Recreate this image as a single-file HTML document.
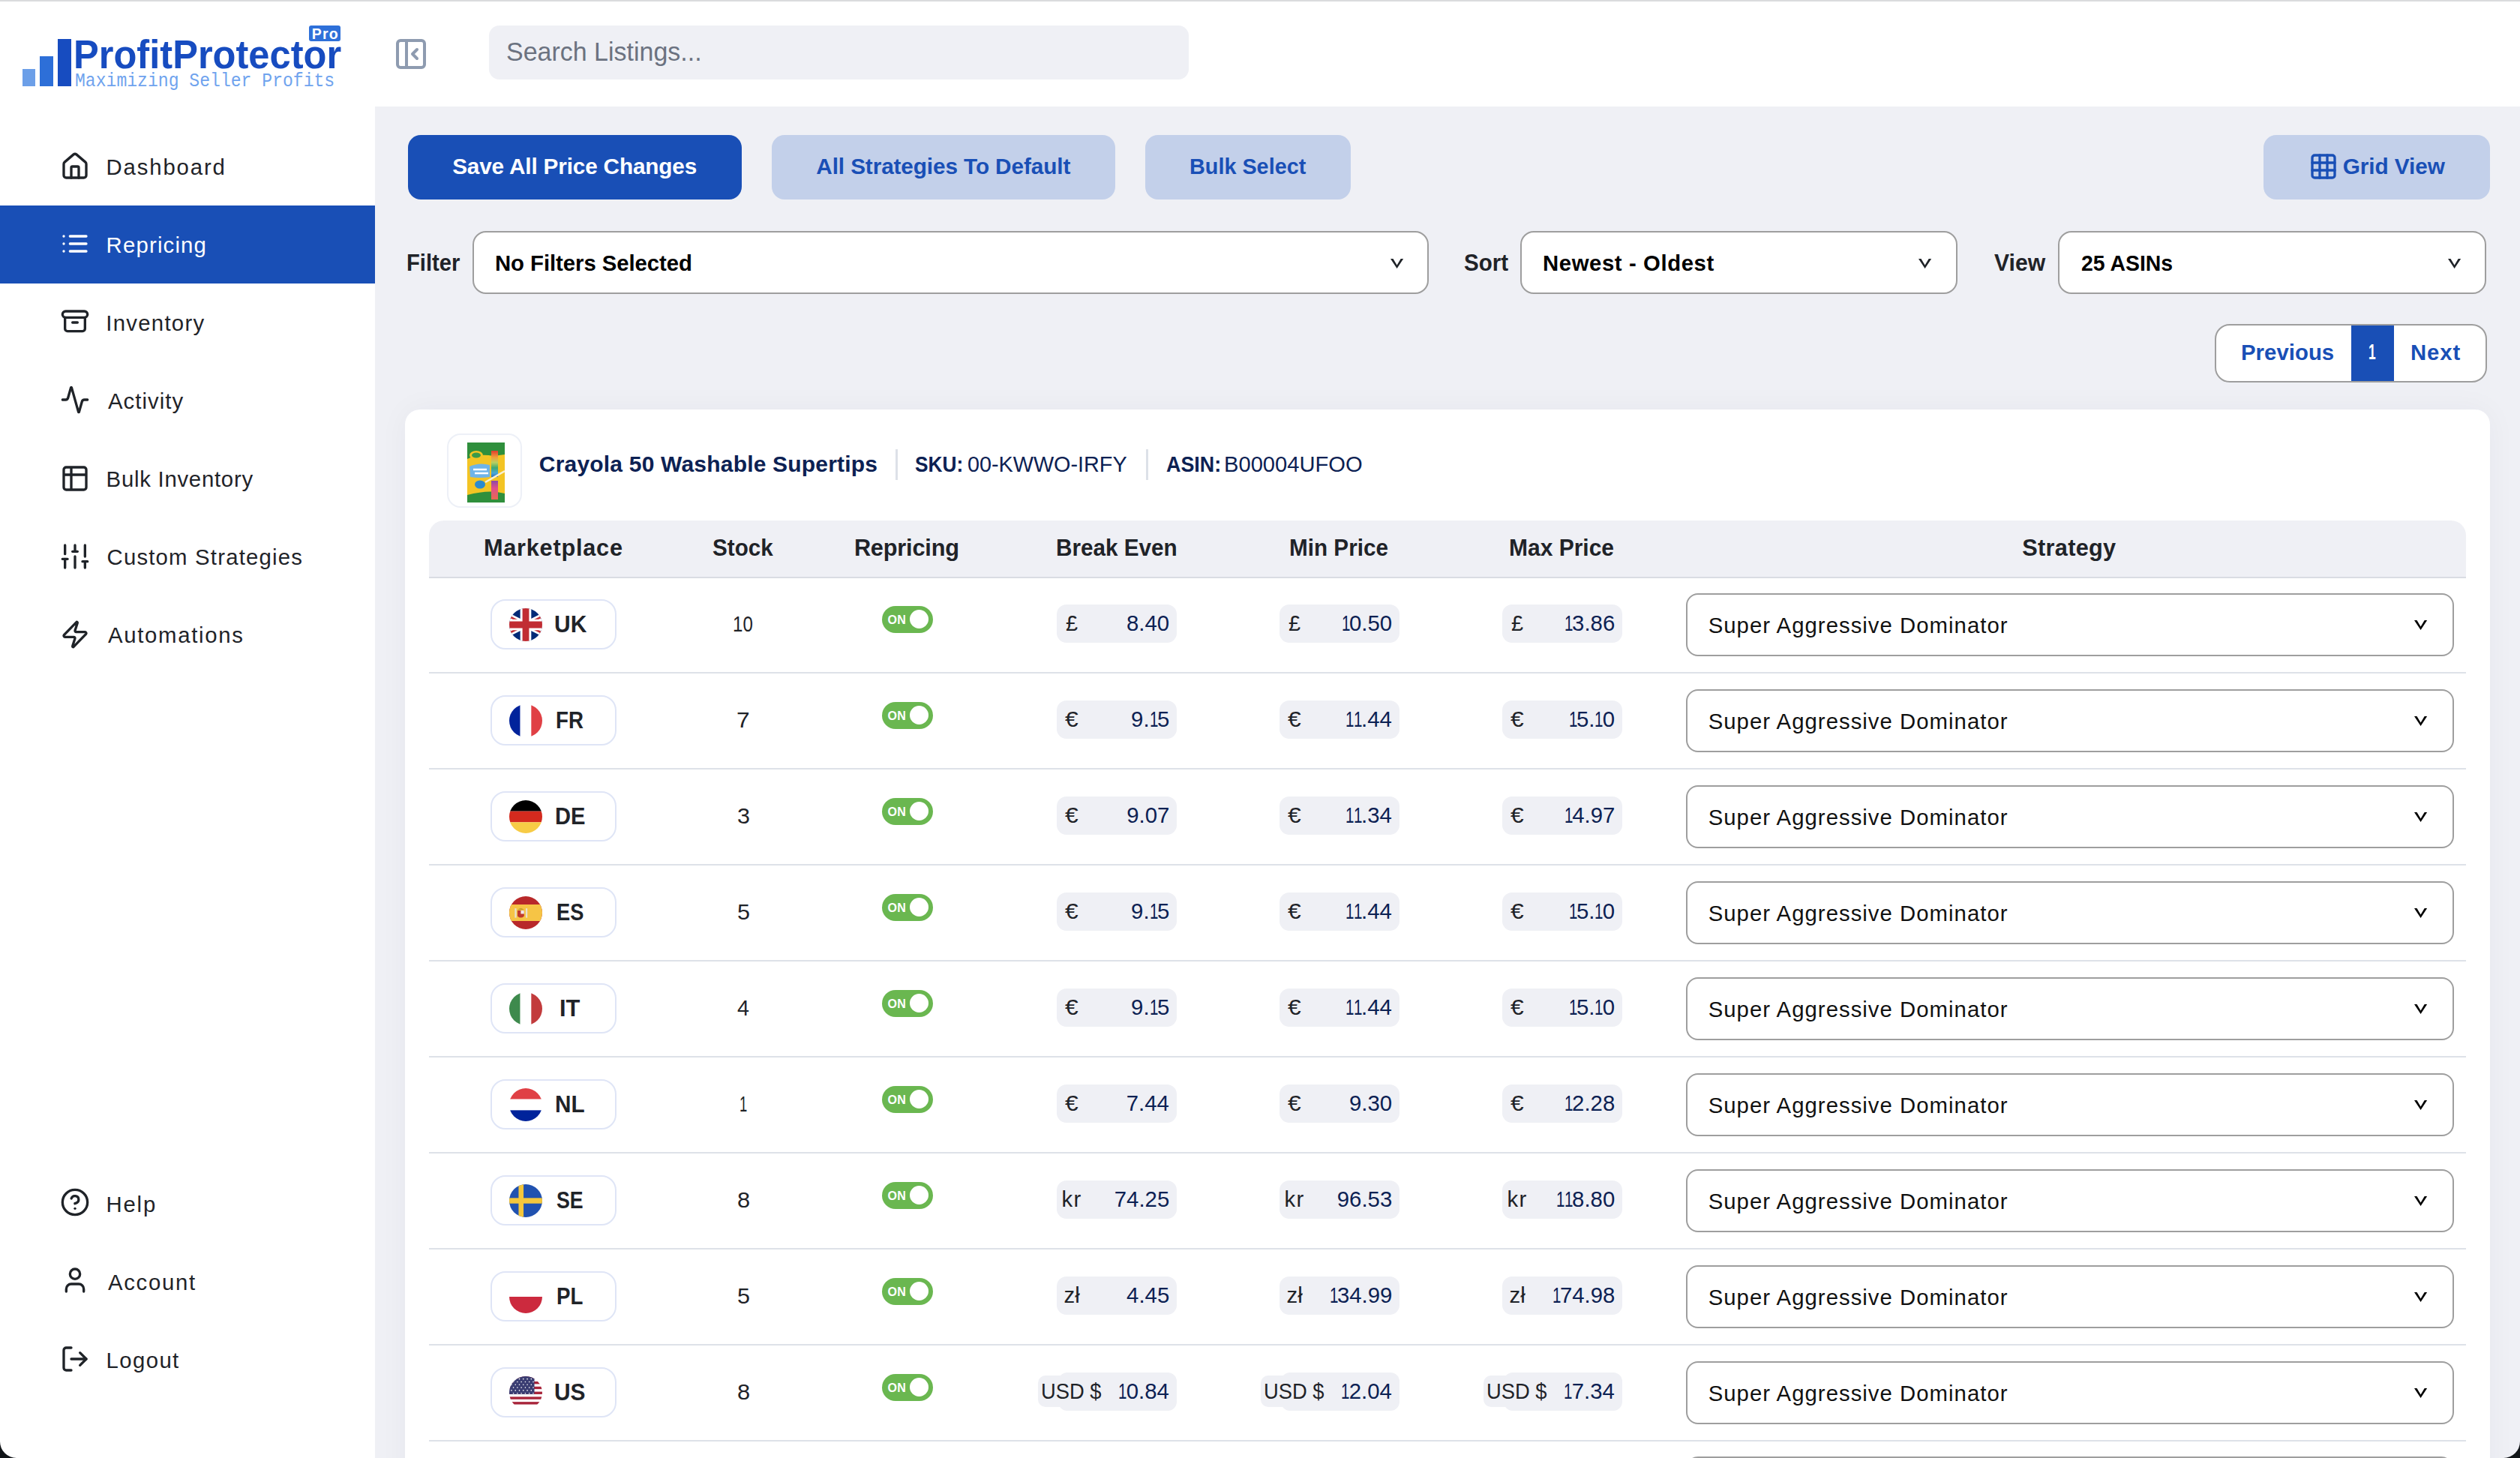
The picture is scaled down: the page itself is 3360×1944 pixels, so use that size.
<!DOCTYPE html>
<html><head><meta charset="utf-8"><style>
html,body{margin:0;padding:0;width:3360px;height:1944px;overflow:hidden;background:#fff;position:relative}
body{font-family:"Liberation Sans",sans-serif}
.t{position:absolute;white-space:nowrap}
.ic{position:absolute}
</style></head><body>
<div style="position:absolute;left:0;top:0;width:3360px;height:2px;background:#dadbdd"></div>
<div style="position:absolute;left:30px;top:92px;width:17px;height:23px;background:#6c9fe8"></div>
<div style="position:absolute;left:53px;top:75px;width:18px;height:40px;background:#2d6fd8"></div>
<div style="position:absolute;left:77px;top:52px;width:18px;height:63px;background:#174cc0"></div>
<div class="t" style="left:97.6px;top:34.6px;font-size:54.47px;line-height:76px;letter-spacing:0.00px;font-weight:700;color:#174cc0;transform:scaleX(0.9291);transform-origin:0 0;">ProfitProtector</div>
<div style="position:absolute;left:412px;top:34px;width:42px;height:21px;background:#2e70d9;border-radius:3px"></div>
<div class="t" style="left:415.7px;top:31.7px;font-size:19.55px;line-height:27px;letter-spacing:1.25px;font-weight:700;color:#ffffff;">Pro</div>
<div class="t" style="left:99.6px;top:90.1px;font-size:25.84px;line-height:36px;letter-spacing:0.00px;font-weight:400;color:#6fa3ee;transform:scaleX(0.8935);transform-origin:0 0;font-family:'Liberation Mono',monospace;">Maximizing Seller Profits</div>
<svg class="ic" style="left:524px;top:48px;" width="48" height="48" viewBox="0 0 24 24" fill="none" stroke="#8e9bb0" stroke-width="2" stroke-linecap="round" stroke-linejoin="round"><rect width="18" height="18" x="3" y="3" rx="2"/><path d="M9 3v18"/><path d="m16 15-3-3 3-3"/></svg>
<div style="position:absolute;left:652px;top:34px;width:933px;height:72px;background:#eff0f5;border-radius:14px"></div>
<div class="t" style="left:674.5px;top:44.4px;font-size:35.61px;line-height:50px;letter-spacing:0.00px;font-weight:400;color:#6b7280;transform:scaleX(0.9540);transform-origin:0 0;">Search Listings...</div>
<div style="position:absolute;left:500px;top:142px;width:2860px;height:1802px;background:#eff0f5"></div>
<svg class="ic" style="left:80px;top:202px;" width="40" height="40" viewBox="0 0 24 24" fill="none" stroke="#1f2328" stroke-width="2" stroke-linecap="round" stroke-linejoin="round"><path d="M15 21v-8a1 1 0 0 0-1-1h-4a1 1 0 0 0-1 1v8"/><path d="M3 10a2 2 0 0 1 .709-1.528l7-5.999a2 2 0 0 1 2.582 0l7 5.999A2 2 0 0 1 21 10v9a2 2 0 0 1-2 2H5a2 2 0 0 1-2-2z"/></svg>
<div class="t" style="left:141.6px;top:201.8px;font-size:29.33px;line-height:41px;letter-spacing:1.85px;font-weight:400;color:#1f2328;">Dashboard</div>
<div style="position:absolute;left:0;top:274px;width:500px;height:104px;background:#194fb6"></div>
<svg class="ic" style="left:80px;top:305px;" width="40" height="40" viewBox="0 0 24 24" fill="none" stroke="#ffffff" stroke-width="2" stroke-linecap="round" stroke-linejoin="round"><path d="M3 12h.01"/><path d="M3 18h.01"/><path d="M3 6h.01"/><path d="M8 12h13"/><path d="M8 18h13"/><path d="M8 6h13"/></svg>
<div class="t" style="left:141.6px;top:305.8px;font-size:29.33px;line-height:41px;letter-spacing:1.18px;font-weight:400;color:#ffffff;">Repricing</div>
<svg class="ic" style="left:80px;top:409.5px;" width="40" height="40" viewBox="0 0 24 24" fill="none" stroke="#1f2328" stroke-width="2" stroke-linecap="round" stroke-linejoin="round"><rect width="20" height="5" x="2" y="3" rx="2.5"/><path d="M4 8v9a2 2 0 0 0 2 2h12a2 2 0 0 0 2-2V8"/><path d="M10 12h4"/></svg>
<div class="t" style="left:141.3px;top:409.8px;font-size:29.33px;line-height:41px;letter-spacing:1.27px;font-weight:400;color:#1f2328;">Inventory</div>
<svg class="ic" style="left:80px;top:513px;" width="40" height="40" viewBox="0 0 24 24" fill="none" stroke="#1f2328" stroke-width="2" stroke-linecap="round" stroke-linejoin="round"><path d="M22 12h-2.48a2 2 0 0 0-1.93 1.46l-2.35 8.36a.25.25 0 0 1-.48 0L9.24 2.18a.25.25 0 0 0-.48 0l-2.35 8.36A2 2 0 0 1 4.49 12H2"/></svg>
<div class="t" style="left:143.9px;top:513.8px;font-size:29.33px;line-height:41px;letter-spacing:1.04px;font-weight:400;color:#1f2328;">Activity</div>
<svg class="ic" style="left:80px;top:618px;" width="40" height="40" viewBox="0 0 24 24" fill="none" stroke="#1f2328" stroke-width="2" stroke-linecap="round" stroke-linejoin="round"><path d="M9 3H5a2 2 0 0 0-2 2v4m6-6h10a2 2 0 0 1 2 2v4M9 3v18m0 0h10a2 2 0 0 0 2-2V9M9 21H5a2 2 0 0 1-2-2V9m0 0h18"/></svg>
<div class="t" style="left:141.6px;top:617.8px;font-size:29.33px;line-height:41px;letter-spacing:0.74px;font-weight:400;color:#1f2328;">Bulk Inventory</div>
<svg class="ic" style="left:80px;top:722px;" width="40" height="40" viewBox="0 0 24 24" fill="none" stroke="#1f2328" stroke-width="2" stroke-linecap="round" stroke-linejoin="round"><line x1="4" x2="4" y1="21" y2="14"/><line x1="4" x2="4" y1="10" y2="3"/><line x1="12" x2="12" y1="21" y2="12"/><line x1="12" x2="12" y1="8" y2="3"/><line x1="20" x2="20" y1="21" y2="16"/><line x1="20" x2="20" y1="12" y2="3"/><line x1="2" x2="6" y1="14" y2="14"/><line x1="10" x2="14" y1="8" y2="8"/><line x1="18" x2="22" y1="16" y2="16"/></svg>
<div class="t" style="left:142.5px;top:721.8px;font-size:29.33px;line-height:41px;letter-spacing:1.20px;font-weight:400;color:#1f2328;">Custom Strategies</div>
<svg class="ic" style="left:80px;top:826px;" width="40" height="40" viewBox="0 0 24 24" fill="none" stroke="#1f2328" stroke-width="2" stroke-linecap="round" stroke-linejoin="round"><path d="M4 14a1 1 0 0 1-.78-1.63l9.9-10.2a.5.5 0 0 1 .86.46l-1.92 6.02A1 1 0 0 0 13 10h7a1 1 0 0 1 .78 1.63l-9.9 10.2a.5.5 0 0 1-.86-.46l1.92-6.02A1 1 0 0 0 11 14z"/></svg>
<div class="t" style="left:143.9px;top:825.8px;font-size:29.33px;line-height:41px;letter-spacing:1.70px;font-weight:400;color:#1f2328;">Automations</div>
<svg class="ic" style="left:80px;top:1583px;" width="40" height="40" viewBox="0 0 24 24" fill="none" stroke="#1f2328" stroke-width="2" stroke-linecap="round" stroke-linejoin="round"><circle cx="12" cy="12" r="10"/><path d="M9.09 9a3 3 0 0 1 5.83 1c0 2-3 3-3 3"/><path d="M12 17h.01"/></svg>
<div class="t" style="left:141.6px;top:1584.8px;font-size:29.33px;line-height:41px;letter-spacing:1.77px;font-weight:400;color:#1f2328;">Help</div>
<svg class="ic" style="left:80px;top:1687.3px;" width="40" height="40" viewBox="0 0 24 24" fill="none" stroke="#1f2328" stroke-width="2" stroke-linecap="round" stroke-linejoin="round"><path d="M19 21v-2a4 4 0 0 0-4-4H9a4 4 0 0 0-4 4v2"/><circle cx="12" cy="7" r="4"/></svg>
<div class="t" style="left:143.9px;top:1688.8px;font-size:29.33px;line-height:41px;letter-spacing:1.72px;font-weight:400;color:#1f2328;">Account</div>
<svg class="ic" style="left:80px;top:1791.5px;" width="40" height="40" viewBox="0 0 24 24" fill="none" stroke="#1f2328" stroke-width="2" stroke-linecap="round" stroke-linejoin="round"><path d="M9 21H5a2 2 0 0 1-2-2V5a2 2 0 0 1 2-2h4"/><polyline points="16 17 21 12 16 7"/><line x1="21" x2="9" y1="12" y2="12"/></svg>
<div class="t" style="left:141.6px;top:1792.8px;font-size:29.33px;line-height:41px;letter-spacing:1.39px;font-weight:400;color:#1f2328;">Logout</div>
<div style="position:absolute;left:544px;top:180px;width:445px;height:86px;background:#194fb6;border-radius:17px"></div>
<div class="t" style="left:603.2px;top:201.3px;font-size:29.75px;line-height:42px;letter-spacing:-0.17px;font-weight:700;color:#ffffff;">Save All Price Changes</div>
<div style="position:absolute;left:1029px;top:180px;width:458px;height:86px;background:#c3d0ea;border-radius:17px"></div>
<div class="t" style="left:1088.3px;top:201.3px;font-size:29.75px;line-height:42px;letter-spacing:-0.11px;font-weight:700;color:#194fb6;">All Strategies To Default</div>
<div style="position:absolute;left:1527px;top:180px;width:274px;height:86px;background:#c3d0ea;border-radius:17px"></div>
<div class="t" style="left:1586.1px;top:201.3px;font-size:29.75px;line-height:42px;letter-spacing:0.00px;font-weight:700;color:#194fb6;transform:scaleX(0.9681);transform-origin:0 0;">Bulk Select</div>
<div style="position:absolute;left:3018px;top:180px;width:302px;height:86px;background:#c3d0ea;border-radius:17px"></div>
<svg class="ic" style="left:3078px;top:202px;" width="40" height="40" viewBox="0 0 24 24" fill="none" stroke="#194fb6" stroke-width="2" stroke-linecap="round" stroke-linejoin="round"><rect width="18" height="18" x="3" y="3" rx="2"/><path d="M3 9h18"/><path d="M3 15h18"/><path d="M9 3v18"/><path d="M15 3v18"/></svg>
<div class="t" style="left:3123.8px;top:201.3px;font-size:29.75px;line-height:42px;letter-spacing:-0.07px;font-weight:700;color:#194fb6;">Grid View</div>
<div class="t" style="left:542.0px;top:328.9px;font-size:30.73px;line-height:43px;letter-spacing:0.00px;font-weight:700;color:#1f2328;transform:scaleX(0.9505);transform-origin:0 0;">Filter</div>
<div style="position:absolute;left:630px;top:308px;width:1275px;height:84px;background:#fff;border:2px solid #9e9e9e;box-sizing:border-box;border-radius:18px"></div>
<div class="t" style="left:660.0px;top:329.8px;font-size:29.33px;line-height:41px;letter-spacing:-0.06px;font-weight:700;color:#000;">No Filters Selected</div>
<svg class="ic" style="left:1854.4px;top:344.5px" width="17.2" height="13" viewBox="0 0 17.2 13"><polygon points="0,0 3.5,0 8.6,8.4 13.7,0 17.2,0 8.6,13" fill="#1f2328"/></svg>
<div class="t" style="left:1952.2px;top:328.9px;font-size:30.73px;line-height:43px;letter-spacing:0.00px;font-weight:700;color:#1f2328;transform:scaleX(0.9619);transform-origin:0 0;">Sort</div>
<div style="position:absolute;left:2027px;top:308px;width:583px;height:84px;background:#fff;border:2px solid #9e9e9e;box-sizing:border-box;border-radius:18px"></div>
<div class="t" style="left:2057.0px;top:329.8px;font-size:29.33px;line-height:41px;letter-spacing:0.59px;font-weight:700;color:#000;">Newest - Oldest</div>
<svg class="ic" style="left:2558.4px;top:344.5px" width="17.2" height="13" viewBox="0 0 17.2 13"><polygon points="0,0 3.5,0 8.6,8.4 13.7,0 17.2,0 8.6,13" fill="#1f2328"/></svg>
<div class="t" style="left:2658.8px;top:328.9px;font-size:30.73px;line-height:43px;letter-spacing:0.00px;font-weight:700;color:#1f2328;transform:scaleX(0.9814);transform-origin:0 0;">View</div>
<div style="position:absolute;left:2744px;top:308px;width:571px;height:84px;background:#fff;border:2px solid #9e9e9e;box-sizing:border-box;border-radius:18px"></div>
<div class="t" style="left:2775.0px;top:329.8px;font-size:29.33px;line-height:41px;letter-spacing:0.00px;font-weight:700;color:#000;transform:scaleX(0.9690);transform-origin:0 0;">25 ASINs</div>
<svg class="ic" style="left:3264.4px;top:344.5px" width="17.2" height="13" viewBox="0 0 17.2 13"><polygon points="0,0 3.5,0 8.6,8.4 13.7,0 17.2,0 8.6,13" fill="#1f2328"/></svg>
<div style="position:absolute;left:2953px;top:432px;width:363px;height:78px;background:#fff;border:2px solid #9e9e9e;box-sizing:border-box;border-radius:20px"></div>
<div style="position:absolute;left:3135px;top:434px;width:57px;height:74px;background:#194fb6"></div>
<div class="t" style="left:2988.0px;top:448.8px;font-size:29.33px;line-height:41px;letter-spacing:0.04px;font-weight:700;color:#194fb6;">Previous</div>
<div class="t" style="left:3158.2px;top:449.3px;font-size:28.63px;line-height:40px;letter-spacing:0.00px;font-weight:400;color:#ffffff;transform:scaleX(0.6057);transform-origin:0 0;font-weight:600">1</div>
<div class="t" style="left:3214.0px;top:448.8px;font-size:29.33px;line-height:41px;letter-spacing:0.90px;font-weight:700;color:#194fb6;">Next</div>
<div style="position:absolute;left:540px;top:546px;width:2780px;height:1500px;background:#fff;border-radius:20px;box-shadow:0 0 40px rgba(30,40,80,0.045)"></div>
<div style="position:absolute;left:596px;top:578px;width:100px;height:99px;background:#fff;border:2px solid #edf0f7;box-sizing:border-box;border-radius:18px"></div>
<svg style="position:absolute;left:623px;top:590px" width="50" height="80" viewBox="0 0 50 80">
<defs><linearGradient id="mk1" x1="0" y1="0" x2="0" y2="1"><stop offset="0" stop-color="#e23b2e"/><stop offset="0.25" stop-color="#f0a03a"/><stop offset="0.45" stop-color="#b8d060"/><stop offset="0.65" stop-color="#3fa870"/><stop offset="0.85" stop-color="#4aa8d8"/><stop offset="1" stop-color="#2f6fb8"/></linearGradient>
<linearGradient id="mk2" x1="0" y1="0" x2="0" y2="1"><stop offset="0" stop-color="#8a4aa8"/><stop offset="0.4" stop-color="#e0508a"/><stop offset="1" stop-color="#e86a50"/></linearGradient></defs>
<rect x="0" y="0" width="50" height="80" fill="#2f8f3c"/>
<path d="M0 22 Q15 14 35 18 L50 16 V68 Q30 62 0 70 Z" fill="#f3c424"/>
<ellipse cx="12" cy="17" rx="9" ry="6" fill="#f3c424"/>
<ellipse cx="12" cy="17" rx="6" ry="3.5" fill="#3a9a4a"/>
<path d="M3 32 Q16 26 30 30 L30 46 Q16 48 4 46 Z" fill="#6fb4e8"/>
<path d="M8 36 H26 M10 41 H28" stroke="#ffffff" stroke-width="2.5"/>
<ellipse cx="17" cy="56" rx="7" ry="5.5" fill="#2a8ad0"/>
<rect x="32" y="11" width="9" height="35" fill="url(#mk1)"/>
<rect x="32" y="51" width="9" height="25" fill="url(#mk2)"/>
<path d="M24 53 L50 38" stroke="#f6f0d8" stroke-width="2.5"/>
</svg>
<div class="t" style="left:718.8px;top:598.3px;font-size:30.03px;line-height:42px;letter-spacing:0.19px;font-weight:700;color:#0c2153;">Crayola 50 Washable Supertips</div>
<div style="position:absolute;left:1194px;top:599px;width:3px;height:41px;background:#dde1e8"></div>
<div class="t" style="left:1220.3px;top:598.3px;font-size:30.03px;line-height:42px;letter-spacing:0.00px;font-weight:700;color:#0c2153;transform:scaleX(0.8747);transform-origin:0 0;">SKU:</div>
<div class="t" style="left:1289.9px;top:598.3px;font-size:30.03px;line-height:42px;letter-spacing:0.00px;font-weight:400;color:#0c2153;transform:scaleX(0.9586);transform-origin:0 0;">00-KWWO-IRFY</div>
<div style="position:absolute;left:1528px;top:599px;width:3px;height:41px;background:#dde1e8"></div>
<div class="t" style="left:1555.3px;top:598.3px;font-size:30.03px;line-height:42px;letter-spacing:0.00px;font-weight:700;color:#0c2153;transform:scaleX(0.8957);transform-origin:0 0;">ASIN:</div>
<div class="t" style="left:1631.6px;top:598.3px;font-size:30.03px;line-height:42px;letter-spacing:0.00px;font-weight:400;color:#0c2153;transform:scaleX(0.9710);transform-origin:0 0;">B00004UFOO</div>
<div style="position:absolute;left:572px;top:694px;width:2716px;height:77px;background:#eff0f5;border-radius:20px 20px 0 0;border-bottom:2px solid #d9dce3;box-sizing:border-box"></div>
<div class="t" style="left:644.9px;top:708.9px;font-size:30.73px;line-height:43px;letter-spacing:0.75px;font-weight:700;color:#1f2328;">Marketplace</div>
<div class="t" style="left:950.2px;top:708.9px;font-size:30.73px;line-height:43px;letter-spacing:0.00px;font-weight:700;color:#1f2328;transform:scaleX(0.9652);transform-origin:0 0;">Stock</div>
<div class="t" style="left:1138.9px;top:708.9px;font-size:30.73px;line-height:43px;letter-spacing:-0.20px;font-weight:700;color:#1f2328;">Repricing</div>
<div class="t" style="left:1408.0px;top:708.9px;font-size:30.73px;line-height:43px;letter-spacing:0.00px;font-weight:700;color:#1f2328;transform:scaleX(0.9666);transform-origin:0 0;">Break Even</div>
<div class="t" style="left:1719.0px;top:708.9px;font-size:30.73px;line-height:43px;letter-spacing:0.00px;font-weight:700;color:#1f2328;transform:scaleX(0.9663);transform-origin:0 0;">Min Price</div>
<div class="t" style="left:2012.0px;top:708.9px;font-size:30.73px;line-height:43px;letter-spacing:0.00px;font-weight:700;color:#1f2328;transform:scaleX(0.9762);transform-origin:0 0;">Max Price</div>
<div class="t" style="left:2696.2px;top:708.9px;font-size:30.73px;line-height:43px;letter-spacing:0.30px;font-weight:700;color:#1f2328;">Strategy</div>
<div style="position:absolute;left:572px;top:896px;width:2716px;height:2px;background:#dee2e8"></div>
<div style="position:absolute;left:654px;top:799px;width:168px;height:67px;border:2px solid #dfe5f6;box-sizing:border-box;border-radius:20px;background:#fff"></div>
<svg style="position:absolute;left:679px;top:811px" width="44" height="44" viewBox="0 0 60 60"><defs><clipPath id="c0"><circle cx="30" cy="30" r="30"/></clipPath></defs><g clip-path="url(#c0)"><svg x="-30" y="0" width="120" height="60" viewBox="0 0 120 60" overflow="visible"><rect width="120" height="60" fill="#012a77"/>
<path d="M0 0L120 60M120 0L0 60" stroke="#fff" stroke-width="11"/>
<path d="M0 0L120 60M120 0L0 60" stroke="#c12d33" stroke-width="3.5"/>
<path d="M60 0V60M0 30H120" stroke="#fff" stroke-width="20"/>
<path d="M60 0V60M0 30H120" stroke="#c12d33" stroke-width="12"/></svg></g></svg>
<div class="t" style="left:738.5px;top:810.4px;font-size:31.56px;line-height:44px;letter-spacing:0.00px;font-weight:700;color:#1f2328;transform:scaleX(0.9493);transform-origin:0 0;">UK</div>
<div class="t" style="left:977.2px;top:811.3px;font-size:29.33px;line-height:41px;letter-spacing:0.00px;font-weight:400;color:#1f2328;transform:scaleX(0.8203);transform-origin:0 0;">10</div>
<div style="position:absolute;left:1176px;top:808px;width:68px;height:36px;border-radius:18px;background:#6ab750"></div>
<div style="position:absolute;left:1213px;top:813px;width:25px;height:25px;border-radius:13px;background:#fff"></div>
<div class="t" style="left:1183.4px;top:815.4px;font-size:16.06px;line-height:22px;letter-spacing:0.33px;font-weight:700;color:#ffffff;">ON</div>
<div style="position:absolute;left:1409px;top:806px;width:160px;height:51px;background:#eff0f5;border-radius:13px"></div>
<div class="t" style="left:1420.7px;top:810.3px;font-size:29.33px;line-height:41px;letter-spacing:0.00px;font-weight:400;color:#1f2328;transform:scaleX(0.9846);transform-origin:0 0;">£</div>
<div class="t" style="right:1800.9px;top:810.3px;font-size:29.33px;line-height:41px;font-weight:400;color:#0c2153;text-align:right">8.40</div>
<div style="position:absolute;left:1706px;top:806px;width:160px;height:51px;background:#eff0f5;border-radius:13px"></div>
<div class="t" style="left:1717.7px;top:810.3px;font-size:29.33px;line-height:41px;letter-spacing:0.00px;font-weight:400;color:#1f2328;transform:scaleX(0.9846);transform-origin:0 0;">£</div>
<div class="t" style="right:1503.9px;top:810.3px;font-size:29.33px;line-height:41px;font-weight:400;color:#0c2153;text-align:right"><span style="display:inline-block;transform:scaleX(0.7);transform-origin:0 0;margin-right:-6.00px">1</span>0.50</div>
<div style="position:absolute;left:2003px;top:806px;width:160px;height:51px;background:#eff0f5;border-radius:13px"></div>
<div class="t" style="left:2014.7px;top:810.3px;font-size:29.33px;line-height:41px;letter-spacing:0.00px;font-weight:400;color:#1f2328;transform:scaleX(0.9846);transform-origin:0 0;">£</div>
<div class="t" style="right:1206.8px;top:810.3px;font-size:29.33px;line-height:41px;font-weight:400;color:#0c2153;text-align:right"><span style="display:inline-block;transform:scaleX(0.7);transform-origin:0 0;margin-right:-6.00px">1</span>3.86</div>
<div style="position:absolute;left:2248px;top:791px;width:1024px;height:84px;background:#fff;border:2px solid #9e9e9e;box-sizing:border-box;border-radius:16px"></div>
<div class="t" style="left:2277.7px;top:812.8px;font-size:29.33px;line-height:41px;letter-spacing:1.02px;font-weight:400;color:#111;">Super Aggressive Dominator</div>
<svg class="ic" style="left:3218.8px;top:827.0px" width="17.2" height="13" viewBox="0 0 17.2 13"><polygon points="0,0 3.5,0 8.6,8.4 13.7,0 17.2,0 8.6,13" fill="#000"/></svg>
<div style="position:absolute;left:572px;top:1024px;width:2716px;height:2px;background:#dee2e8"></div>
<div style="position:absolute;left:654px;top:927px;width:168px;height:67px;border:2px solid #dfe5f6;box-sizing:border-box;border-radius:20px;background:#fff"></div>
<svg style="position:absolute;left:679px;top:939px" width="44" height="44" viewBox="0 0 60 60"><defs><clipPath id="c1"><circle cx="30" cy="30" r="30"/></clipPath></defs><g clip-path="url(#c1)"><rect width="20" height="60" fill="#00239b"/><rect x="20" width="20" height="60" fill="#fff"/><rect x="40" width="20" height="60" fill="#e04045"/></g></svg>
<div class="t" style="left:741.0px;top:938.4px;font-size:31.56px;line-height:44px;letter-spacing:0.00px;font-weight:700;color:#1f2328;transform:scaleX(0.8779);transform-origin:0 0;">FR</div>
<div class="t" style="left:982.4px;top:939.3px;font-size:29.33px;line-height:41px;letter-spacing:0.00px;font-weight:400;color:#1f2328;transform:scaleX(1.0806);transform-origin:0 0;">7</div>
<div style="position:absolute;left:1176px;top:936px;width:68px;height:36px;border-radius:18px;background:#6ab750"></div>
<div style="position:absolute;left:1213px;top:941px;width:25px;height:25px;border-radius:13px;background:#fff"></div>
<div class="t" style="left:1183.4px;top:943.4px;font-size:16.06px;line-height:22px;letter-spacing:0.33px;font-weight:700;color:#ffffff;">ON</div>
<div style="position:absolute;left:1409px;top:934px;width:160px;height:51px;background:#eff0f5;border-radius:13px"></div>
<div class="t" style="left:1419.8px;top:938.3px;font-size:29.33px;line-height:41px;letter-spacing:0.00px;font-weight:400;color:#1f2328;transform:scaleX(1.0834);transform-origin:0 0;">€</div>
<div class="t" style="right:1800.8px;top:938.3px;font-size:29.33px;line-height:41px;font-weight:400;color:#0c2153;text-align:right">9.<span style="display:inline-block;transform:scaleX(0.7);transform-origin:0 0;margin-right:-6.00px">1</span>5</div>
<div style="position:absolute;left:1706px;top:934px;width:160px;height:51px;background:#eff0f5;border-radius:13px"></div>
<div class="t" style="left:1716.8px;top:938.3px;font-size:29.33px;line-height:41px;letter-spacing:0.00px;font-weight:400;color:#1f2328;transform:scaleX(1.0834);transform-origin:0 0;">€</div>
<div class="t" style="right:1504.2px;top:938.3px;font-size:29.33px;line-height:41px;font-weight:400;color:#0c2153;text-align:right"><span style="display:inline-block;transform:scaleX(0.7);transform-origin:0 0;margin-right:-6.00px">1</span><span style="display:inline-block;transform:scaleX(0.7);transform-origin:0 0;margin-right:-6.00px">1</span>.44</div>
<div style="position:absolute;left:2003px;top:934px;width:160px;height:51px;background:#eff0f5;border-radius:13px"></div>
<div class="t" style="left:2013.8px;top:938.3px;font-size:29.33px;line-height:41px;letter-spacing:0.00px;font-weight:400;color:#1f2328;transform:scaleX(1.0834);transform-origin:0 0;">€</div>
<div class="t" style="right:1206.9px;top:938.3px;font-size:29.33px;line-height:41px;font-weight:400;color:#0c2153;text-align:right"><span style="display:inline-block;transform:scaleX(0.7);transform-origin:0 0;margin-right:-6.00px">1</span>5.<span style="display:inline-block;transform:scaleX(0.7);transform-origin:0 0;margin-right:-6.00px">1</span>0</div>
<div style="position:absolute;left:2248px;top:919px;width:1024px;height:84px;background:#fff;border:2px solid #9e9e9e;box-sizing:border-box;border-radius:16px"></div>
<div class="t" style="left:2277.7px;top:940.8px;font-size:29.33px;line-height:41px;letter-spacing:1.02px;font-weight:400;color:#111;">Super Aggressive Dominator</div>
<svg class="ic" style="left:3218.8px;top:955.0px" width="17.2" height="13" viewBox="0 0 17.2 13"><polygon points="0,0 3.5,0 8.6,8.4 13.7,0 17.2,0 8.6,13" fill="#000"/></svg>
<div style="position:absolute;left:572px;top:1152px;width:2716px;height:2px;background:#dee2e8"></div>
<div style="position:absolute;left:654px;top:1055px;width:168px;height:67px;border:2px solid #dfe5f6;box-sizing:border-box;border-radius:20px;background:#fff"></div>
<svg style="position:absolute;left:679px;top:1067px" width="44" height="44" viewBox="0 0 60 60"><defs><clipPath id="c2"><circle cx="30" cy="30" r="30"/></clipPath></defs><g clip-path="url(#c2)"><rect width="60" height="20" fill="#000"/><rect y="20" width="60" height="20" fill="#d42a1e"/><rect y="40" width="60" height="20" fill="#f7cb45"/></g></svg>
<div class="t" style="left:739.6px;top:1066.4px;font-size:31.56px;line-height:44px;letter-spacing:0.00px;font-weight:700;color:#1f2328;transform:scaleX(0.9239);transform-origin:0 0;">DE</div>
<div class="t" style="left:982.9px;top:1067.3px;font-size:29.33px;line-height:41px;letter-spacing:0.00px;font-weight:400;color:#1f2328;transform:scaleX(1.0408);transform-origin:0 0;">3</div>
<div style="position:absolute;left:1176px;top:1064px;width:68px;height:36px;border-radius:18px;background:#6ab750"></div>
<div style="position:absolute;left:1213px;top:1069px;width:25px;height:25px;border-radius:13px;background:#fff"></div>
<div class="t" style="left:1183.4px;top:1071.4px;font-size:16.06px;line-height:22px;letter-spacing:0.33px;font-weight:700;color:#ffffff;">ON</div>
<div style="position:absolute;left:1409px;top:1062px;width:160px;height:51px;background:#eff0f5;border-radius:13px"></div>
<div class="t" style="left:1419.8px;top:1066.3px;font-size:29.33px;line-height:41px;letter-spacing:0.00px;font-weight:400;color:#1f2328;transform:scaleX(1.0834);transform-origin:0 0;">€</div>
<div class="t" style="right:1800.6px;top:1066.3px;font-size:29.33px;line-height:41px;font-weight:400;color:#0c2153;text-align:right">9.07</div>
<div style="position:absolute;left:1706px;top:1062px;width:160px;height:51px;background:#eff0f5;border-radius:13px"></div>
<div class="t" style="left:1716.8px;top:1066.3px;font-size:29.33px;line-height:41px;letter-spacing:0.00px;font-weight:400;color:#1f2328;transform:scaleX(1.0834);transform-origin:0 0;">€</div>
<div class="t" style="right:1504.2px;top:1066.3px;font-size:29.33px;line-height:41px;font-weight:400;color:#0c2153;text-align:right"><span style="display:inline-block;transform:scaleX(0.7);transform-origin:0 0;margin-right:-6.00px">1</span><span style="display:inline-block;transform:scaleX(0.7);transform-origin:0 0;margin-right:-6.00px">1</span>.34</div>
<div style="position:absolute;left:2003px;top:1062px;width:160px;height:51px;background:#eff0f5;border-radius:13px"></div>
<div class="t" style="left:2013.8px;top:1066.3px;font-size:29.33px;line-height:41px;letter-spacing:0.00px;font-weight:400;color:#1f2328;transform:scaleX(1.0834);transform-origin:0 0;">€</div>
<div class="t" style="right:1206.6px;top:1066.3px;font-size:29.33px;line-height:41px;font-weight:400;color:#0c2153;text-align:right"><span style="display:inline-block;transform:scaleX(0.7);transform-origin:0 0;margin-right:-6.00px">1</span>4.97</div>
<div style="position:absolute;left:2248px;top:1047px;width:1024px;height:84px;background:#fff;border:2px solid #9e9e9e;box-sizing:border-box;border-radius:16px"></div>
<div class="t" style="left:2277.7px;top:1068.8px;font-size:29.33px;line-height:41px;letter-spacing:1.02px;font-weight:400;color:#111;">Super Aggressive Dominator</div>
<svg class="ic" style="left:3218.8px;top:1083.0px" width="17.2" height="13" viewBox="0 0 17.2 13"><polygon points="0,0 3.5,0 8.6,8.4 13.7,0 17.2,0 8.6,13" fill="#000"/></svg>
<div style="position:absolute;left:572px;top:1280px;width:2716px;height:2px;background:#dee2e8"></div>
<div style="position:absolute;left:654px;top:1183px;width:168px;height:67px;border:2px solid #dfe5f6;box-sizing:border-box;border-radius:20px;background:#fff"></div>
<svg style="position:absolute;left:679px;top:1195px" width="44" height="44" viewBox="0 0 60 60"><defs><clipPath id="c3"><circle cx="30" cy="30" r="30"/></clipPath></defs><g clip-path="url(#c3)"><rect width="60" height="60" fill="#b8282a"/><rect y="15" width="60" height="30" fill="#f6c445"/>
<rect x="10" y="22" width="3" height="17" fill="#e8e0d0"/><rect x="30" y="22" width="3" height="17" fill="#e8e0d0"/>
<path d="M15 26 H27 V36 Q21 42 15 36 Z" fill="#c0392b"/><rect x="21" y="26" width="6" height="6" fill="#f0e8e8"/>
<path d="M15 25 Q21 18 27 25 Z" fill="#c8a030"/></g></svg>
<div class="t" style="left:741.7px;top:1194.4px;font-size:31.56px;line-height:44px;letter-spacing:0.00px;font-weight:700;color:#1f2328;transform:scaleX(0.8646);transform-origin:0 0;">ES</div>
<div class="t" style="left:982.8px;top:1195.3px;font-size:29.33px;line-height:41px;letter-spacing:0.00px;font-weight:400;color:#1f2328;transform:scaleX(1.0408);transform-origin:0 0;">5</div>
<div style="position:absolute;left:1176px;top:1192px;width:68px;height:36px;border-radius:18px;background:#6ab750"></div>
<div style="position:absolute;left:1213px;top:1197px;width:25px;height:25px;border-radius:13px;background:#fff"></div>
<div class="t" style="left:1183.4px;top:1199.4px;font-size:16.06px;line-height:22px;letter-spacing:0.33px;font-weight:700;color:#ffffff;">ON</div>
<div style="position:absolute;left:1409px;top:1190px;width:160px;height:51px;background:#eff0f5;border-radius:13px"></div>
<div class="t" style="left:1419.8px;top:1194.3px;font-size:29.33px;line-height:41px;letter-spacing:0.00px;font-weight:400;color:#1f2328;transform:scaleX(1.0834);transform-origin:0 0;">€</div>
<div class="t" style="right:1800.8px;top:1194.3px;font-size:29.33px;line-height:41px;font-weight:400;color:#0c2153;text-align:right">9.<span style="display:inline-block;transform:scaleX(0.7);transform-origin:0 0;margin-right:-6.00px">1</span>5</div>
<div style="position:absolute;left:1706px;top:1190px;width:160px;height:51px;background:#eff0f5;border-radius:13px"></div>
<div class="t" style="left:1716.8px;top:1194.3px;font-size:29.33px;line-height:41px;letter-spacing:0.00px;font-weight:400;color:#1f2328;transform:scaleX(1.0834);transform-origin:0 0;">€</div>
<div class="t" style="right:1504.2px;top:1194.3px;font-size:29.33px;line-height:41px;font-weight:400;color:#0c2153;text-align:right"><span style="display:inline-block;transform:scaleX(0.7);transform-origin:0 0;margin-right:-6.00px">1</span><span style="display:inline-block;transform:scaleX(0.7);transform-origin:0 0;margin-right:-6.00px">1</span>.44</div>
<div style="position:absolute;left:2003px;top:1190px;width:160px;height:51px;background:#eff0f5;border-radius:13px"></div>
<div class="t" style="left:2013.8px;top:1194.3px;font-size:29.33px;line-height:41px;letter-spacing:0.00px;font-weight:400;color:#1f2328;transform:scaleX(1.0834);transform-origin:0 0;">€</div>
<div class="t" style="right:1206.9px;top:1194.3px;font-size:29.33px;line-height:41px;font-weight:400;color:#0c2153;text-align:right"><span style="display:inline-block;transform:scaleX(0.7);transform-origin:0 0;margin-right:-6.00px">1</span>5.<span style="display:inline-block;transform:scaleX(0.7);transform-origin:0 0;margin-right:-6.00px">1</span>0</div>
<div style="position:absolute;left:2248px;top:1175px;width:1024px;height:84px;background:#fff;border:2px solid #9e9e9e;box-sizing:border-box;border-radius:16px"></div>
<div class="t" style="left:2277.7px;top:1196.8px;font-size:29.33px;line-height:41px;letter-spacing:1.02px;font-weight:400;color:#111;">Super Aggressive Dominator</div>
<svg class="ic" style="left:3218.8px;top:1211.0px" width="17.2" height="13" viewBox="0 0 17.2 13"><polygon points="0,0 3.5,0 8.6,8.4 13.7,0 17.2,0 8.6,13" fill="#000"/></svg>
<div style="position:absolute;left:572px;top:1408px;width:2716px;height:2px;background:#dee2e8"></div>
<div style="position:absolute;left:654px;top:1311px;width:168px;height:67px;border:2px solid #dfe5f6;box-sizing:border-box;border-radius:20px;background:#fff"></div>
<svg style="position:absolute;left:679px;top:1323px" width="44" height="44" viewBox="0 0 60 60"><defs><clipPath id="c4"><circle cx="30" cy="30" r="30"/></clipPath></defs><g clip-path="url(#c4)"><rect width="20" height="60" fill="#3e8a4d"/><rect x="20" width="20" height="60" fill="#fff"/><rect x="40" width="20" height="60" fill="#c23b3c"/></g></svg>
<div class="t" style="left:745.9px;top:1322.4px;font-size:31.56px;line-height:44px;letter-spacing:0.00px;font-weight:700;color:#1f2328;transform:scaleX(0.9778);transform-origin:0 0;">IT</div>
<div class="t" style="left:983.4px;top:1323.3px;font-size:29.33px;line-height:41px;letter-spacing:0.00px;font-weight:400;color:#1f2328;transform:scaleX(0.9790);transform-origin:0 0;">4</div>
<div style="position:absolute;left:1176px;top:1320px;width:68px;height:36px;border-radius:18px;background:#6ab750"></div>
<div style="position:absolute;left:1213px;top:1325px;width:25px;height:25px;border-radius:13px;background:#fff"></div>
<div class="t" style="left:1183.4px;top:1327.4px;font-size:16.06px;line-height:22px;letter-spacing:0.33px;font-weight:700;color:#ffffff;">ON</div>
<div style="position:absolute;left:1409px;top:1318px;width:160px;height:51px;background:#eff0f5;border-radius:13px"></div>
<div class="t" style="left:1419.8px;top:1322.3px;font-size:29.33px;line-height:41px;letter-spacing:0.00px;font-weight:400;color:#1f2328;transform:scaleX(1.0834);transform-origin:0 0;">€</div>
<div class="t" style="right:1800.8px;top:1322.3px;font-size:29.33px;line-height:41px;font-weight:400;color:#0c2153;text-align:right">9.<span style="display:inline-block;transform:scaleX(0.7);transform-origin:0 0;margin-right:-6.00px">1</span>5</div>
<div style="position:absolute;left:1706px;top:1318px;width:160px;height:51px;background:#eff0f5;border-radius:13px"></div>
<div class="t" style="left:1716.8px;top:1322.3px;font-size:29.33px;line-height:41px;letter-spacing:0.00px;font-weight:400;color:#1f2328;transform:scaleX(1.0834);transform-origin:0 0;">€</div>
<div class="t" style="right:1504.2px;top:1322.3px;font-size:29.33px;line-height:41px;font-weight:400;color:#0c2153;text-align:right"><span style="display:inline-block;transform:scaleX(0.7);transform-origin:0 0;margin-right:-6.00px">1</span><span style="display:inline-block;transform:scaleX(0.7);transform-origin:0 0;margin-right:-6.00px">1</span>.44</div>
<div style="position:absolute;left:2003px;top:1318px;width:160px;height:51px;background:#eff0f5;border-radius:13px"></div>
<div class="t" style="left:2013.8px;top:1322.3px;font-size:29.33px;line-height:41px;letter-spacing:0.00px;font-weight:400;color:#1f2328;transform:scaleX(1.0834);transform-origin:0 0;">€</div>
<div class="t" style="right:1206.9px;top:1322.3px;font-size:29.33px;line-height:41px;font-weight:400;color:#0c2153;text-align:right"><span style="display:inline-block;transform:scaleX(0.7);transform-origin:0 0;margin-right:-6.00px">1</span>5.<span style="display:inline-block;transform:scaleX(0.7);transform-origin:0 0;margin-right:-6.00px">1</span>0</div>
<div style="position:absolute;left:2248px;top:1303px;width:1024px;height:84px;background:#fff;border:2px solid #9e9e9e;box-sizing:border-box;border-radius:16px"></div>
<div class="t" style="left:2277.7px;top:1324.8px;font-size:29.33px;line-height:41px;letter-spacing:1.02px;font-weight:400;color:#111;">Super Aggressive Dominator</div>
<svg class="ic" style="left:3218.8px;top:1339.0px" width="17.2" height="13" viewBox="0 0 17.2 13"><polygon points="0,0 3.5,0 8.6,8.4 13.7,0 17.2,0 8.6,13" fill="#000"/></svg>
<div style="position:absolute;left:572px;top:1536px;width:2716px;height:2px;background:#dee2e8"></div>
<div style="position:absolute;left:654px;top:1439px;width:168px;height:67px;border:2px solid #dfe5f6;box-sizing:border-box;border-radius:20px;background:#fff"></div>
<svg style="position:absolute;left:679px;top:1451px" width="44" height="44" viewBox="0 0 60 60"><defs><clipPath id="c5"><circle cx="30" cy="30" r="30"/></clipPath></defs><g clip-path="url(#c5)"><rect width="60" height="20" fill="#e04045"/><rect y="20" width="60" height="20" fill="#fff"/><rect y="40" width="60" height="20" fill="#00239b"/></g></svg>
<div class="t" style="left:740.0px;top:1450.4px;font-size:31.56px;line-height:44px;letter-spacing:0.00px;font-weight:700;color:#1f2328;transform:scaleX(0.9415);transform-origin:0 0;">NL</div>
<div class="t" style="left:985.6px;top:1451.3px;font-size:29.33px;line-height:41px;letter-spacing:0.00px;font-weight:400;color:#1f2328;transform:scaleX(0.6307);transform-origin:0 0;">1</div>
<div style="position:absolute;left:1176px;top:1448px;width:68px;height:36px;border-radius:18px;background:#6ab750"></div>
<div style="position:absolute;left:1213px;top:1453px;width:25px;height:25px;border-radius:13px;background:#fff"></div>
<div class="t" style="left:1183.4px;top:1455.4px;font-size:16.06px;line-height:22px;letter-spacing:0.33px;font-weight:700;color:#ffffff;">ON</div>
<div style="position:absolute;left:1409px;top:1446px;width:160px;height:51px;background:#eff0f5;border-radius:13px"></div>
<div class="t" style="left:1419.8px;top:1450.3px;font-size:29.33px;line-height:41px;letter-spacing:0.00px;font-weight:400;color:#1f2328;transform:scaleX(1.0834);transform-origin:0 0;">€</div>
<div class="t" style="right:1801.2px;top:1450.3px;font-size:29.33px;line-height:41px;font-weight:400;color:#0c2153;text-align:right">7.44</div>
<div style="position:absolute;left:1706px;top:1446px;width:160px;height:51px;background:#eff0f5;border-radius:13px"></div>
<div class="t" style="left:1716.8px;top:1450.3px;font-size:29.33px;line-height:41px;letter-spacing:0.00px;font-weight:400;color:#1f2328;transform:scaleX(1.0834);transform-origin:0 0;">€</div>
<div class="t" style="right:1503.9px;top:1450.3px;font-size:29.33px;line-height:41px;font-weight:400;color:#0c2153;text-align:right">9.30</div>
<div style="position:absolute;left:2003px;top:1446px;width:160px;height:51px;background:#eff0f5;border-radius:13px"></div>
<div class="t" style="left:2013.8px;top:1450.3px;font-size:29.33px;line-height:41px;letter-spacing:0.00px;font-weight:400;color:#1f2328;transform:scaleX(1.0834);transform-origin:0 0;">€</div>
<div class="t" style="right:1206.8px;top:1450.3px;font-size:29.33px;line-height:41px;font-weight:400;color:#0c2153;text-align:right"><span style="display:inline-block;transform:scaleX(0.7);transform-origin:0 0;margin-right:-6.00px">1</span>2.28</div>
<div style="position:absolute;left:2248px;top:1431px;width:1024px;height:84px;background:#fff;border:2px solid #9e9e9e;box-sizing:border-box;border-radius:16px"></div>
<div class="t" style="left:2277.7px;top:1452.8px;font-size:29.33px;line-height:41px;letter-spacing:1.02px;font-weight:400;color:#111;">Super Aggressive Dominator</div>
<svg class="ic" style="left:3218.8px;top:1467.0px" width="17.2" height="13" viewBox="0 0 17.2 13"><polygon points="0,0 3.5,0 8.6,8.4 13.7,0 17.2,0 8.6,13" fill="#000"/></svg>
<div style="position:absolute;left:572px;top:1664px;width:2716px;height:2px;background:#dee2e8"></div>
<div style="position:absolute;left:654px;top:1567px;width:168px;height:67px;border:2px solid #dfe5f6;box-sizing:border-box;border-radius:20px;background:#fff"></div>
<svg style="position:absolute;left:679px;top:1579px" width="44" height="44" viewBox="0 0 60 60"><defs><clipPath id="c6"><circle cx="30" cy="30" r="30"/></clipPath></defs><g clip-path="url(#c6)"><rect width="60" height="60" fill="#2152b0"/><rect x="17" width="9" height="60" fill="#f5c73c"/><rect y="25" width="60" height="10" fill="#f5c73c"/></g></svg>
<div class="t" style="left:742.1px;top:1578.4px;font-size:31.56px;line-height:44px;letter-spacing:0.00px;font-weight:700;color:#1f2328;transform:scaleX(0.8473);transform-origin:0 0;">SE</div>
<div class="t" style="left:982.7px;top:1579.3px;font-size:29.33px;line-height:41px;letter-spacing:0.00px;font-weight:400;color:#1f2328;transform:scaleX(1.0519);transform-origin:0 0;">8</div>
<div style="position:absolute;left:1176px;top:1576px;width:68px;height:36px;border-radius:18px;background:#6ab750"></div>
<div style="position:absolute;left:1213px;top:1581px;width:25px;height:25px;border-radius:13px;background:#fff"></div>
<div class="t" style="left:1183.4px;top:1583.4px;font-size:16.06px;line-height:22px;letter-spacing:0.33px;font-weight:700;color:#ffffff;">ON</div>
<div style="position:absolute;left:1409px;top:1574px;width:160px;height:51px;background:#eff0f5;border-radius:13px"></div>
<div class="t" style="left:1415.4px;top:1578.3px;font-size:29.33px;line-height:41px;letter-spacing:1.50px;font-weight:400;color:#1f2328;">kr</div>
<div class="t" style="right:1800.8px;top:1578.3px;font-size:29.33px;line-height:41px;font-weight:400;color:#0c2153;text-align:right">74.25</div>
<div style="position:absolute;left:1706px;top:1574px;width:160px;height:51px;background:#eff0f5;border-radius:13px"></div>
<div class="t" style="left:1712.4px;top:1578.3px;font-size:29.33px;line-height:41px;letter-spacing:1.50px;font-weight:400;color:#1f2328;">kr</div>
<div class="t" style="right:1503.8px;top:1578.3px;font-size:29.33px;line-height:41px;font-weight:400;color:#0c2153;text-align:right">96.53</div>
<div style="position:absolute;left:2003px;top:1574px;width:160px;height:51px;background:#eff0f5;border-radius:13px"></div>
<div class="t" style="left:2009.4px;top:1578.3px;font-size:29.33px;line-height:41px;letter-spacing:1.50px;font-weight:400;color:#1f2328;">kr</div>
<div class="t" style="right:1206.8px;top:1578.3px;font-size:29.33px;line-height:41px;font-weight:400;color:#0c2153;text-align:right"><span style="display:inline-block;transform:scaleX(0.7);transform-origin:0 0;margin-right:-6.00px">1</span><span style="display:inline-block;transform:scaleX(0.7);transform-origin:0 0;margin-right:-6.00px">1</span>8.80</div>
<div style="position:absolute;left:2248px;top:1559px;width:1024px;height:84px;background:#fff;border:2px solid #9e9e9e;box-sizing:border-box;border-radius:16px"></div>
<div class="t" style="left:2277.7px;top:1580.8px;font-size:29.33px;line-height:41px;letter-spacing:1.02px;font-weight:400;color:#111;">Super Aggressive Dominator</div>
<svg class="ic" style="left:3218.8px;top:1595.0px" width="17.2" height="13" viewBox="0 0 17.2 13"><polygon points="0,0 3.5,0 8.6,8.4 13.7,0 17.2,0 8.6,13" fill="#000"/></svg>
<div style="position:absolute;left:572px;top:1792px;width:2716px;height:2px;background:#dee2e8"></div>
<div style="position:absolute;left:654px;top:1695px;width:168px;height:67px;border:2px solid #dfe5f6;box-sizing:border-box;border-radius:20px;background:#fff"></div>
<svg style="position:absolute;left:679px;top:1707px" width="44" height="44" viewBox="0 0 60 60"><defs><clipPath id="c7"><circle cx="30" cy="30" r="30"/></clipPath></defs><g clip-path="url(#c7)"><rect width="60" height="30" fill="#fff"/><rect y="30" width="60" height="30" fill="#cc2a3e"/></g></svg>
<div class="t" style="left:742.1px;top:1706.4px;font-size:31.56px;line-height:44px;letter-spacing:0.00px;font-weight:700;color:#1f2328;transform:scaleX(0.8780);transform-origin:0 0;">PL</div>
<div class="t" style="left:982.8px;top:1707.3px;font-size:29.33px;line-height:41px;letter-spacing:0.00px;font-weight:400;color:#1f2328;transform:scaleX(1.0408);transform-origin:0 0;">5</div>
<div style="position:absolute;left:1176px;top:1704px;width:68px;height:36px;border-radius:18px;background:#6ab750"></div>
<div style="position:absolute;left:1213px;top:1709px;width:25px;height:25px;border-radius:13px;background:#fff"></div>
<div class="t" style="left:1183.4px;top:1711.4px;font-size:16.06px;line-height:22px;letter-spacing:0.33px;font-weight:700;color:#ffffff;">ON</div>
<div style="position:absolute;left:1409px;top:1702px;width:160px;height:51px;background:#eff0f5;border-radius:13px"></div>
<div class="t" style="left:1418.5px;top:1706.3px;font-size:29.33px;line-height:41px;letter-spacing:0.03px;font-weight:400;color:#1f2328;">zł</div>
<div class="t" style="right:1800.8px;top:1706.3px;font-size:29.33px;line-height:41px;font-weight:400;color:#0c2153;text-align:right">4.45</div>
<div style="position:absolute;left:1706px;top:1702px;width:160px;height:51px;background:#eff0f5;border-radius:13px"></div>
<div class="t" style="left:1715.5px;top:1706.3px;font-size:29.33px;line-height:41px;letter-spacing:0.03px;font-weight:400;color:#1f2328;">zł</div>
<div class="t" style="right:1503.6px;top:1706.3px;font-size:29.33px;line-height:41px;font-weight:400;color:#0c2153;text-align:right"><span style="display:inline-block;transform:scaleX(0.7);transform-origin:0 0;margin-right:-6.00px">1</span>34.99</div>
<div style="position:absolute;left:2003px;top:1702px;width:160px;height:51px;background:#eff0f5;border-radius:13px"></div>
<div class="t" style="left:2012.5px;top:1706.3px;font-size:29.33px;line-height:41px;letter-spacing:0.03px;font-weight:400;color:#1f2328;">zł</div>
<div class="t" style="right:1206.7px;top:1706.3px;font-size:29.33px;line-height:41px;font-weight:400;color:#0c2153;text-align:right"><span style="display:inline-block;transform:scaleX(0.7);transform-origin:0 0;margin-right:-6.00px">1</span>74.98</div>
<div style="position:absolute;left:2248px;top:1687px;width:1024px;height:84px;background:#fff;border:2px solid #9e9e9e;box-sizing:border-box;border-radius:16px"></div>
<div class="t" style="left:2277.7px;top:1708.8px;font-size:29.33px;line-height:41px;letter-spacing:1.02px;font-weight:400;color:#111;">Super Aggressive Dominator</div>
<svg class="ic" style="left:3218.8px;top:1723.0px" width="17.2" height="13" viewBox="0 0 17.2 13"><polygon points="0,0 3.5,0 8.6,8.4 13.7,0 17.2,0 8.6,13" fill="#000"/></svg>
<div style="position:absolute;left:572px;top:1920px;width:2716px;height:2px;background:#dee2e8"></div>
<div style="position:absolute;left:654px;top:1823px;width:168px;height:67px;border:2px solid #dfe5f6;box-sizing:border-box;border-radius:20px;background:#fff"></div>
<svg style="position:absolute;left:679px;top:1835px" width="44" height="44" viewBox="0 0 60 60"><defs><clipPath id="c8"><circle cx="30" cy="30" r="30"/></clipPath></defs><g clip-path="url(#c8)"><rect width="60" height="60" fill="#fff"/><rect y="-9.04" width="60" height="4.63" fill="#a8243a"/><rect y="0.23" width="60" height="4.63" fill="#a8243a"/><rect y="9.50" width="60" height="4.63" fill="#a8243a"/><rect y="18.77" width="60" height="4.63" fill="#a8243a"/><rect y="28.04" width="60" height="4.63" fill="#a8243a"/><rect y="37.31" width="60" height="4.63" fill="#a8243a"/><rect y="46.58" width="60" height="4.63" fill="#a8243a"/><rect width="45.7" height="32.6" fill="#3a3d72"/><circle cx="4.0" cy="5.0" r="1.1" fill="#fff"/><circle cx="11.2" cy="5.0" r="1.1" fill="#fff"/><circle cx="18.4" cy="5.0" r="1.1" fill="#fff"/><circle cx="25.6" cy="5.0" r="1.1" fill="#fff"/><circle cx="32.8" cy="5.0" r="1.1" fill="#fff"/><circle cx="40.0" cy="5.0" r="1.1" fill="#fff"/><circle cx="7.6" cy="10.2" r="1.1" fill="#fff"/><circle cx="14.8" cy="10.2" r="1.1" fill="#fff"/><circle cx="22.0" cy="10.2" r="1.1" fill="#fff"/><circle cx="29.2" cy="10.2" r="1.1" fill="#fff"/><circle cx="36.4" cy="10.2" r="1.1" fill="#fff"/><circle cx="43.6" cy="10.2" r="1.1" fill="#fff"/><circle cx="4.0" cy="15.4" r="1.1" fill="#fff"/><circle cx="11.2" cy="15.4" r="1.1" fill="#fff"/><circle cx="18.4" cy="15.4" r="1.1" fill="#fff"/><circle cx="25.6" cy="15.4" r="1.1" fill="#fff"/><circle cx="32.8" cy="15.4" r="1.1" fill="#fff"/><circle cx="40.0" cy="15.4" r="1.1" fill="#fff"/><circle cx="7.6" cy="20.6" r="1.1" fill="#fff"/><circle cx="14.8" cy="20.6" r="1.1" fill="#fff"/><circle cx="22.0" cy="20.6" r="1.1" fill="#fff"/><circle cx="29.2" cy="20.6" r="1.1" fill="#fff"/><circle cx="36.4" cy="20.6" r="1.1" fill="#fff"/><circle cx="43.6" cy="20.6" r="1.1" fill="#fff"/><circle cx="4.0" cy="25.8" r="1.1" fill="#fff"/><circle cx="11.2" cy="25.8" r="1.1" fill="#fff"/><circle cx="18.4" cy="25.8" r="1.1" fill="#fff"/><circle cx="25.6" cy="25.8" r="1.1" fill="#fff"/><circle cx="32.8" cy="25.8" r="1.1" fill="#fff"/><circle cx="40.0" cy="25.8" r="1.1" fill="#fff"/><circle cx="7.6" cy="31.0" r="1.1" fill="#fff"/><circle cx="14.8" cy="31.0" r="1.1" fill="#fff"/><circle cx="22.0" cy="31.0" r="1.1" fill="#fff"/><circle cx="29.2" cy="31.0" r="1.1" fill="#fff"/><circle cx="36.4" cy="31.0" r="1.1" fill="#fff"/><circle cx="43.6" cy="31.0" r="1.1" fill="#fff"/></g></svg>
<div class="t" style="left:739.0px;top:1834.4px;font-size:31.56px;line-height:44px;letter-spacing:0.00px;font-weight:700;color:#1f2328;transform:scaleX(0.9480);transform-origin:0 0;">US</div>
<div class="t" style="left:982.7px;top:1835.3px;font-size:29.33px;line-height:41px;letter-spacing:0.00px;font-weight:400;color:#1f2328;transform:scaleX(1.0519);transform-origin:0 0;">8</div>
<div style="position:absolute;left:1176px;top:1832px;width:68px;height:36px;border-radius:18px;background:#6ab750"></div>
<div style="position:absolute;left:1213px;top:1837px;width:25px;height:25px;border-radius:13px;background:#fff"></div>
<div class="t" style="left:1183.4px;top:1839.4px;font-size:16.06px;line-height:22px;letter-spacing:0.33px;font-weight:700;color:#ffffff;">ON</div>
<div style="position:absolute;left:1384px;top:1834px;width:60px;height:42px;background:#eff0f5;border-radius:10px"></div>
<div style="position:absolute;left:1411px;top:1830px;width:158px;height:51px;background:#eff0f5;border-radius:12px"></div>
<div class="t" style="left:1387.9px;top:1834.3px;font-size:29.33px;line-height:41px;letter-spacing:0.00px;font-weight:400;color:#1f2328;transform:scaleX(0.9323);transform-origin:0 0;">USD $</div>
<div class="t" style="right:1801.2px;top:1834.3px;font-size:29.33px;line-height:41px;font-weight:400;color:#0c2153;text-align:right"><span style="display:inline-block;transform:scaleX(0.7);transform-origin:0 0;margin-right:-6.00px">1</span>0.84</div>
<div style="position:absolute;left:1681px;top:1834px;width:60px;height:42px;background:#eff0f5;border-radius:10px"></div>
<div style="position:absolute;left:1708px;top:1830px;width:158px;height:51px;background:#eff0f5;border-radius:12px"></div>
<div class="t" style="left:1684.9px;top:1834.3px;font-size:29.33px;line-height:41px;letter-spacing:0.00px;font-weight:400;color:#1f2328;transform:scaleX(0.9323);transform-origin:0 0;">USD $</div>
<div class="t" style="right:1504.2px;top:1834.3px;font-size:29.33px;line-height:41px;font-weight:400;color:#0c2153;text-align:right"><span style="display:inline-block;transform:scaleX(0.7);transform-origin:0 0;margin-right:-6.00px">1</span>2.04</div>
<div style="position:absolute;left:1978px;top:1834px;width:60px;height:42px;background:#eff0f5;border-radius:10px"></div>
<div style="position:absolute;left:2005px;top:1830px;width:158px;height:51px;background:#eff0f5;border-radius:12px"></div>
<div class="t" style="left:1981.9px;top:1834.3px;font-size:29.33px;line-height:41px;letter-spacing:0.00px;font-weight:400;color:#1f2328;transform:scaleX(0.9323);transform-origin:0 0;">USD $</div>
<div class="t" style="right:1207.2px;top:1834.3px;font-size:29.33px;line-height:41px;font-weight:400;color:#0c2153;text-align:right"><span style="display:inline-block;transform:scaleX(0.7);transform-origin:0 0;margin-right:-6.00px">1</span>7.34</div>
<div style="position:absolute;left:2248px;top:1815px;width:1024px;height:84px;background:#fff;border:2px solid #9e9e9e;box-sizing:border-box;border-radius:16px"></div>
<div class="t" style="left:2277.7px;top:1836.8px;font-size:29.33px;line-height:41px;letter-spacing:1.02px;font-weight:400;color:#111;">Super Aggressive Dominator</div>
<svg class="ic" style="left:3218.8px;top:1851.0px" width="17.2" height="13" viewBox="0 0 17.2 13"><polygon points="0,0 3.5,0 8.6,8.4 13.7,0 17.2,0 8.6,13" fill="#000"/></svg>
<div style="position:absolute;left:2248px;top:1942px;width:1023px;height:83px;background:#fff;border:2px solid #9e9e9e;box-sizing:border-box;border-radius:16px"></div>
<svg style="position:absolute;left:0;top:1922px" width="22" height="22" viewBox="0 0 22 22"><path d="M0 0V22H22A22 22 0 0 1 0 0Z" fill="#111518"/></svg>
<svg style="position:absolute;left:3338px;top:1922px" width="22" height="22" viewBox="0 0 22 22"><path d="M22 0V22H0A22 22 0 0 0 22 0Z" fill="#111518"/></svg>
</body></html>
